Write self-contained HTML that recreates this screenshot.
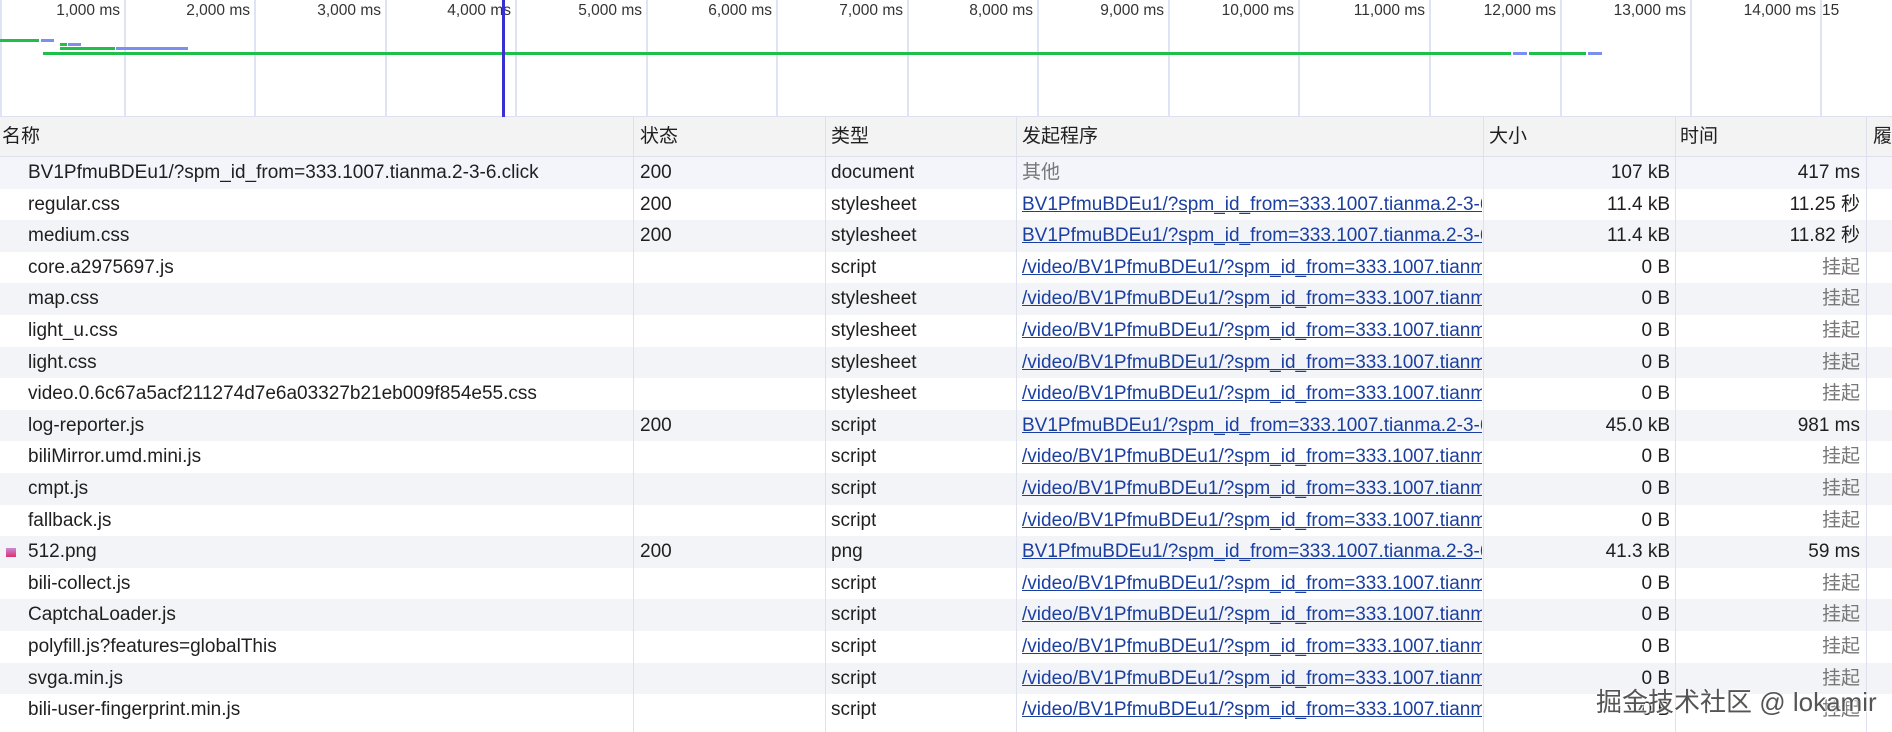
<!DOCTYPE html>
<html><head><meta charset="utf-8"><style>
*{margin:0;padding:0;box-sizing:border-box}
body{width:1892px;height:732px;overflow:hidden;background:#fff;font-family:"Liberation Sans","Noto Sans CJK SC",sans-serif;color:#1f1f1f;position:relative}
.tl{position:absolute;left:0;top:0;width:1892px;height:117px;border-bottom:1px solid #dde1ee}
.g{position:absolute;top:0;width:2px;height:117px;background:#dfe3f3}
.lab{position:absolute;top:2px;font-size:15.5px;color:#333;text-align:right;width:120px}
.bar{position:absolute;height:3px}
.gr{background:#1ec04a}.bl{background:#7b8ff0}
.hdr{position:absolute;left:0;top:117px;width:1892px;height:40px;background:#f3f3f3;border-bottom:1px solid #dde1ee}
.row{position:absolute;left:0;width:1892px;height:31.6px}
.c{position:absolute;top:0;height:100%;font-size:19px;line-height:31.6px;white-space:nowrap;overflow:hidden}
.hdr .c{line-height:40px}
.vl{position:absolute;top:117px;width:1px;height:615px;background:#dde1ee}
a{color:#1a3fa0;text-decoration:underline}
.r{text-align:right}
.gy{color:#777}
.wm{position:absolute;left:1596px;top:682px;font-size:26px;color:#555;text-shadow:0 0 2px #fff,0 0 2px #fff,1px 1px 1px #fff}
</style></head><body>
<div class="tl">
<div class="g" style="left:0"></div>
<div class="g" style="left:124px"></div><div class="g" style="left:254px"></div><div class="g" style="left:385px"></div><div class="g" style="left:515px"></div><div class="g" style="left:646px"></div><div class="g" style="left:776px"></div><div class="g" style="left:907px"></div><div class="g" style="left:1037px"></div><div class="g" style="left:1168px"></div><div class="g" style="left:1298px"></div><div class="g" style="left:1429px"></div><div class="g" style="left:1560px"></div><div class="g" style="left:1690px"></div><div class="g" style="left:1820px"></div>
<div class="lab" style="left:0">1,000 ms</div><div class="lab" style="left:130px">2,000 ms</div><div class="lab" style="left:261px">3,000 ms</div><div class="lab" style="left:391px">4,000 ms</div><div class="lab" style="left:522px">5,000 ms</div><div class="lab" style="left:652px">6,000 ms</div><div class="lab" style="left:783px">7,000 ms</div><div class="lab" style="left:913px">8,000 ms</div><div class="lab" style="left:1044px">9,000 ms</div><div class="lab" style="left:1174px">10,000 ms</div><div class="lab" style="left:1305px">11,000 ms</div><div class="lab" style="left:1436px">12,000 ms</div><div class="lab" style="left:1566px">13,000 ms</div><div class="lab" style="left:1696px">14,000 ms</div>
<div class="lab" style="text-align:left;left:1822px">15</div>
<div class="bar gr" style="left:0;top:39px;width:39px"></div>
<div class="bar bl" style="left:41px;top:39px;width:13px"></div>
<div class="bar gr" style="left:60px;top:43px;width:7px"></div>
<div class="bar bl" style="left:68px;top:43px;width:13px"></div>
<div class="bar gr" style="left:60px;top:47px;width:55px"></div>
<div class="bar bl" style="left:116px;top:47px;width:72px"></div>
<div class="bar gr" style="left:43px;top:52px;width:1468px"></div>
<div class="bar bl" style="left:1513px;top:52px;width:14px"></div>
<div class="bar gr" style="left:1529px;top:52px;width:57px"></div>
<div class="bar bl" style="left:1588px;top:52px;width:14px"></div>
<div style="position:absolute;left:502px;top:0;width:3px;height:117px;background:#3a2fd0"></div>
</div>
<div class="hdr">
<div class="c" style="left:2px">名称</div><div class="c" style="left:640px">状态</div><div class="c" style="left:831px">类型</div><div class="c" style="left:1022px">发起程序</div><div class="c" style="left:1489px">大小</div><div class="c" style="left:1680px">时间</div><div class="c" style="left:1873px">履</div>
</div>
<div id="rows"></div>
<div class="vl" style="left:633px"></div><div class="vl" style="left:825px"></div><div class="vl" style="left:1016px"></div><div class="vl" style="left:1483px"></div><div class="vl" style="left:1675px"></div><div class="vl" style="left:1866px"></div>
<div class="wm">掘金技术社区 @ lokamir</div>
<script>
var L1='BV1PfmuBDEu1/?spm_id_from=333.1007.tianma.2-3-6.click',L2='/video/BV1PfmuBDEu1/?spm_id_from=333.1007.tianma.2-3-6.click';
var d=[
['BV1PfmuBDEu1/?spm_id_from=333.1007.tianma.2-3-6.click','200','document','其他','107 kB','417 ms'],
['regular.css','200','stylesheet',L1,'11.4 kB','11.25 秒'],
['medium.css','200','stylesheet',L1,'11.4 kB','11.82 秒'],
['core.a2975697.js','','script',L2,'0 B','挂起'],
['map.css','','stylesheet',L2,'0 B','挂起'],
['light_u.css','','stylesheet',L2,'0 B','挂起'],
['light.css','','stylesheet',L2,'0 B','挂起'],
['video.0.6c67a5acf211274d7e6a03327b21eb009f854e55.css','','stylesheet',L2,'0 B','挂起'],
['log-reporter.js','200','script',L1,'45.0 kB','981 ms'],
['biliMirror.umd.mini.js','','script',L2,'0 B','挂起'],
['cmpt.js','','script',L2,'0 B','挂起'],
['fallback.js','','script',L2,'0 B','挂起'],
['512.png','200','png',L1,'41.3 kB','59 ms'],
['bili-collect.js','','script',L2,'0 B','挂起'],
['CaptchaLoader.js','','script',L2,'0 B','挂起'],
['polyfill.js?features=globalThis','','script',L2,'0 B','挂起'],
['svga.min.js','','script',L2,'0 B','挂起'],
['bili-user-fingerprint.min.js','','script',L2,'0 B','挂起']];
var h='';
d.forEach(function(r,i){
var bg=i==0?'#f4f5fb':(i%2==0?'#f3f4f8':'#fff');
var ic=r[0]=='512.png'?'<div style="position:absolute;left:6px;top:12px;width:10px;height:9px;background:linear-gradient(#c98ad8,#e0306f)"></div>':'';
h+='<div class="row" style="top:'+(157+i*31.6)+'px;background:'+bg+'">'+ic+
'<div class="c" style="left:28px;width:600px">'+r[0]+'</div>'+
'<div class="c" style="left:640px">'+r[1]+'</div>'+
'<div class="c" style="left:831px">'+r[2]+'</div>'+
'<div class="c" style="left:1022px;width:460px">'+(i==0?'<span class="gy">其他</span>':'<a>'+r[3]+'</a>')+'</div>'+
'<div class="c r" style="left:1483px;width:187px">'+r[4]+'</div>'+
'<div class="c r '+(r[5]=='挂起'?'gy':'')+'" style="left:1675px;width:185px">'+r[5]+'</div></div>';
});
document.getElementById('rows').innerHTML=h;
</script>
</body></html>
